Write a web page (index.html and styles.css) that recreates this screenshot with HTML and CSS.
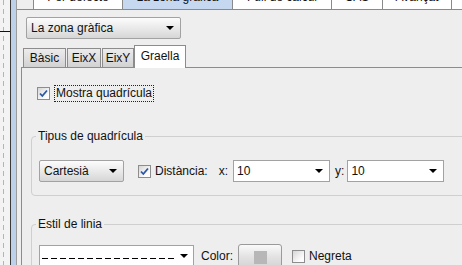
FILE: index.html
```html
<!DOCTYPE html>
<html lang="ca">
<head>
<meta charset="UTF-8">
<title>Preferències</title>
<link rel="stylesheet" href="styles.css">
</head>
<body>
<div class="window">
  <div class="desk"></div>
  <div class="frame"></div>
  <div class="main">
    <div class="toptabs">
      <div class="ttab w89"><span>Per defecte</span></div>
      <div class="ttab w110 active"><span>La zona gràfica</span></div>
      <div class="ttab w99"><span>Full de càlcul</span></div>
      <div class="ttab w51"><span>CAS</span></div>
      <div class="ttab w69"><span>Avançat</span></div>
      <div class="ttab w60"><span></span></div>
    </div>

    <div class="content">
      <div class="combo zone">
        <span>La zona gràfica</span>
        <i class="arrow"></i>
      </div>

      <div class="subtabs">
        <div class="stab w43">Bàsic</div>
        <div class="stab w34">EixX</div>
        <div class="stab w32">EixY</div>
        <div class="stab w52 selected">Graella</div>
      </div>

      <div class="panel">
        <div class="check-row">
          <span class="cb checked">
            <svg width="11" height="11" viewBox="0 0 11 11"><path d="M2 5.5 L4.3 8 L9 2.5" stroke="#2c57a8" stroke-width="1.8" fill="none"/></svg>
          </span>
          <span class="focus">Mostra quadrícula</span>
        </div>

        <fieldset class="group group-grid">
          <legend>Tipus de quadrícula</legend>
          <div class="row">
            <div class="combo cart">
              <span>Cartesià</span>
              <i class="arrow"></i>
            </div>
            <span class="cb dist">
              <svg width="11" height="11" viewBox="0 0 11 11"><path d="M2 5.5 L4.3 8 L9 2.5" stroke="#2c57a8" stroke-width="1.8" fill="none"/></svg>
            </span>
            <span class="lbl-dist">Distància:</span>
            <span class="lbl-x">x:</span>
            <div class="field">
              <span>10</span>
              <i class="arrow"></i>
            </div>
            <span class="lbl-y">y:</span>
            <div class="field field-y">
              <span>10</span>
              <i class="arrow"></i>
            </div>
          </div>
        </fieldset>

        <fieldset class="group group-line">
          <legend>Estil de linia</legend>
          <div class="row">
            <div class="field linestyle">
              <span class="dashes"></span>
              <i class="arrow"></i>
            </div>
            <span class="lbl-color">Color:</span>
            <div class="colorbtn"><span class="swatch"></span></div>
            <span class="cb bold"></span>
            <span class="lbl-bold">Negreta</span>
          </div>
        </fieldset>
      </div>
    </div>
  </div>
</div>
</body>
</html>
```

FILE: styles.css
```css
body {
  margin: 0;
  background-color: #eeeeee;
  font-family: "Liberation Sans", Arial, sans-serif;
  font-size: 12px;
  color: #111;
  overflow: hidden;
}
.window {
  display: flex;
  width: 600px;
  height: 265px;
}
.desk {
  width: 10px;
  flex: none;
  background:
    linear-gradient(#111, #111) 0 31px / 10px 1px no-repeat,
    repeating-linear-gradient(to bottom, #b4b4b4 0 5px, transparent 5px 9px) 3px 0 / 1px 100% no-repeat,
    #f3f3f3;
}
.frame {
  width: 5px;
  flex: none;
  background-color: #bdd2ea;
  border-left: 1px solid #3a3a3a;
  border-right: 1px solid #9c9c9c;
}
.main {
  flex: 1;
}

/* top tabs, cut off by the window */
.toptabs {
  display: flex;
  height: 9px;
  padding-left: 16px;
  border-bottom: 1px solid #8a8a8a;
  overflow: hidden;
}
.ttab {
  box-sizing: border-box;
  border-left: 1px solid #8a8a8a;
  background-color: #fff;
  text-align: center;
  overflow: hidden;
}
.ttab span {
  display: block;
  margin-top: -10px;
  line-height: 14px;
}
.ttab.active {
  background-color: #c6d8ef;
}
.w89 { width: 89px; }
.w110 { width: 110px; }
.w99 { width: 99px; }
.w51 { width: 51px; }
.w69 { width: 69px; }
.w60 { width: 60px; }

.content {
  padding: 7px 0 0 4px;
}

/* combo boxes */
.combo {
  display: flex;
  align-items: center;
  box-sizing: border-box;
  height: 22px;
  padding: 0 6px 0 4px;
  border: 1px solid #a2a2a2;
  border-radius: 2px;
  background: linear-gradient(#fcfcfc, #e6e6e6 60%, #d6d6d6);
}
.arrow {
  margin-left: auto;
  width: 0;
  height: 0;
  border-left: 4px solid transparent;
  border-right: 4px solid transparent;
  border-top: 4px solid #000;
}
.zone {
  width: 155px;
  margin-left: 5px;
}

/* sub tabs */
.subtabs {
  display: flex;
  align-items: flex-end;
  height: 22px;
  margin-top: 6px;
  padding-left: 2px;
  position: relative;
  z-index: 1;
}
.stab {
  box-sizing: border-box;
  height: 19px;
  line-height: 18px;
  text-align: center;
  border: 1px solid #8c8c8c;
  border-bottom: none;
  background: linear-gradient(#ececec, #d2d2d2);
}
.stab + .stab {
  margin-left: 1px;
}
.stab.selected {
  height: 23px;
  margin-left: 0;
  margin-bottom: -1px;
  line-height: 20px;
  background: #fff;
}
.w43 { width: 43px; }
.w34 { width: 34px; }
.w32 { width: 32px; }
.w52 { width: 52px; }

.panel {
  border-top: 1px solid #8c8c8c;
  border-left: 1px solid #8c8c8c;
  padding: 17px 0 0 9px;
}

/* check boxes */
.cb {
  display: inline-flex;
  align-items: center;
  justify-content: center;
  flex: none;
  box-sizing: border-box;
  width: 13px;
  height: 13px;
  border: 1px solid #8d8d8d;
  background: linear-gradient(135deg, #d6d6d6, #fdfdfd 75%);
}
.check-row {
  display: flex;
  align-items: center;
  height: 17px;
  margin-left: 6px;
}
.focus {
  margin-left: 4px;
  padding: 0 1px 0 1px;
  line-height: 15px;
  border: 1px dotted #222;
}

/* titled groups */
.group {
  margin: 27px 0 0 0;
  border: 1px solid #cfcfcf;
  border-radius: 4px;
  min-inline-size: 0;
}
.group legend {
  margin-left: -3px;
  padding: 0 2px;
  line-height: 14px;
}
.group-grid {
  padding: 17px 0 13px 7px;
}
.group-line {
  margin-top: 21px;
  padding: 14px 0 10px 7px;
}
.row {
  display: flex;
  align-items: center;
  height: 22px;
}
.cart {
  width: 85px;
}
.dist {
  margin-left: 14px;
}
.lbl-dist {
  margin-left: 4px;
}
.lbl-x {
  margin-left: 11px;
}
.field {
  display: flex;
  align-items: center;
  box-sizing: border-box;
  width: 97px;
  height: 22px;
  margin-left: 5px;
  padding: 0 6px 0 3px;
  border: 1px solid #a2a2a2;
  background-color: #fff;
}
.lbl-y {
  margin-left: 5px;
}
.field-y {
  margin-left: 3px;
}
.linestyle {
  width: 155px;
  margin-left: 0;
  padding-left: 2px;
  padding-right: 5px;
}
.dashes {
  width: 135px;
  height: 1px;
  margin-top: 4px;
  background: repeating-linear-gradient(to right, #000 0 6px, transparent 6px 9px);
}
.lbl-color {
  margin-left: 7px;
}
.colorbtn {
  display: flex;
  justify-content: center;
  box-sizing: border-box;
  width: 44px;
  height: 24px;
  margin-left: 5px;
  padding-top: 6px;
  border: 1px solid #9a9a9a;
  border-radius: 3px;
  background: linear-gradient(#fafafa, #e4e4e4 50%, #d4d4d4);
}
.swatch {
  width: 13px;
  height: 13px;
  background-color: #b7b7b7;
}
.bold {
  margin-left: 10px;
}
.lbl-bold {
  margin-left: 4px;
}
```
